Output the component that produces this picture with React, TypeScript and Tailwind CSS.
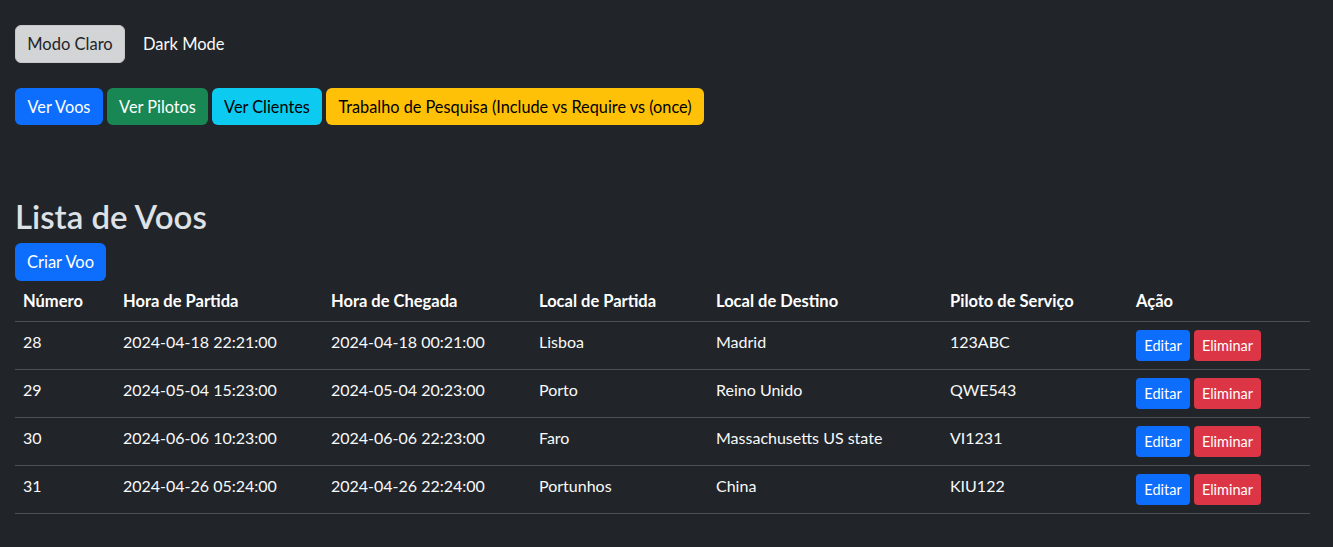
import React from "react";

const rows = [
  ["28", "2024-04-18 22:21:00", "2024-04-18 00:21:00", "Lisboa", "Madrid", "123ABC"],
  ["29", "2024-05-04 15:23:00", "2024-05-04 20:23:00", "Porto", "Reino Unido", "QWE543"],
  ["30", "2024-06-06 10:23:00", "2024-06-06 22:23:00", "Faro", "Massachusetts US state", "VI1231"],
  ["31", "2024-04-26 05:24:00", "2024-04-26 22:24:00", "Portunhos", "China", "KIU122"],
];

const headers = ["Número", "Hora de Partida", "Hora de Chegada", "Local de Partida", "Local de Destino", "Piloto de Serviço", "Ação"];
const widths = ["w-[100px]", "w-[208px]", "w-[208px]", "w-[177px]", "w-[234px]", "w-[186px]", "w-[182px]"];

export default function App() {
  return (
    <div className="min-h-[547px] bg-[#212529] text-[#dee2e6] text-[16px] leading-[24px]" style={{ fontFamily: '"Segoe UI", Lato, sans-serif' }}>
      <div className="px-[15px] pt-[25px] pr-[23px]">
        <div className="flex items-center gap-[6px]">
          <button className="h-[38px] w-[110px] rounded-[6px] bg-[#d3d4d5] text-[#212529] border border-[#c6c7c8] text-[16.5px]">Modo Claro</button>
          <button className="h-[38px] px-[12px] text-[#f8f9fa] text-[16.5px]">Dark Mode</button>
        </div>
        <div className="flex items-center gap-[4px] mt-[25px] text-[16.3px]">
          <button className="h-[37px] w-[88px] rounded-[6px] bg-[#0d6efd] text-white">Ver Voos</button>
          <button className="h-[37px] w-[101px] rounded-[6px] bg-[#198754] text-white">Ver Pilotos</button>
          <button className="h-[37px] w-[110px] rounded-[6px] bg-[#0dcaf0] text-black">Ver Clientes</button>
          <button className="h-[37px] w-[378px] rounded-[6px] bg-[#ffc107] text-black">Trabalho de Pesquisa (Include vs Require vs (once)</button>
        </div>
        <h2 className="mt-[72px] text-[33px] leading-[38px] font-semibold text-[#dee2e6]">Lista de Voos</h2>
        <button className="mt-[8px] h-[38px] w-[91px] rounded-[6px] bg-[#0d6efd] text-white text-[16.5px]">Criar Voo</button>
        <table className="mt-0 border-collapse text-[#f8f9fa] w-[1295px] table-fixed text-[16px]">
          <thead>
            <tr className="border-b border-[#495057]">
              {headers.map((h, i) => (
                <th key={h} className={`${widths[i]} text-left font-bold px-[8px] py-[8px] text-white text-[16.5px]`}>{h}</th>
              ))}
            </tr>
          </thead>
          <tbody>
            {rows.map((r) => (
              <tr key={r[0]} className="border-b border-[#495057]">
                {r.map((c, i) => (
                  <td key={i} className="px-[8px] py-[8px] h-[48px] align-top">
                    <div>{c}</div>
                  </td>
                ))}
                <td className="px-[8px] py-[8px] h-[48px] align-top">
                  <div className="flex gap-[4px]">
                    <button className="h-[31px] w-[54px] rounded-[4px] bg-[#0d6efd] text-white text-[14.5px]">Editar</button>
                    <button className="h-[31px] w-[67px] rounded-[4px] bg-[#dc3545] text-white text-[14.5px]">Eliminar</button>
                  </div>
                </td>
              </tr>
            ))}
          </tbody>
        </table>
      </div>
    </div>
  );
}
